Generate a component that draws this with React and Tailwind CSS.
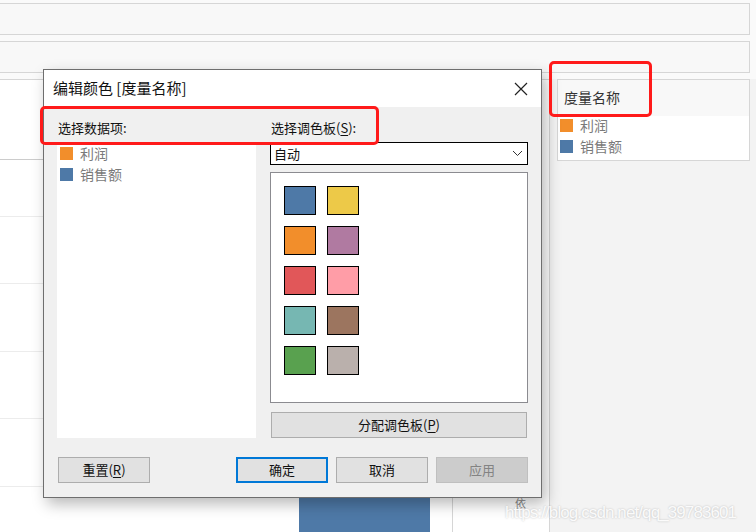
import React from 'react';

const font = { fontFamily: '"Noto Sans CJK SC", "Noto Sans", sans-serif' };

const swatches = [
  ['#4e79a7', '#edc948'],
  ['#f28e2b', '#b07aa1'],
  ['#e15759', '#ff9da7'],
  ['#76b7b2', '#9c755f'],
  ['#59a14f', '#bab0ac'],
];

const Btn = ({ children, className = '' }) => (
  <div className={`h-[26px] flex items-center justify-center text-[13px] ${className}`}>{children}</div>
);

const Dialog = () => (
  <div className="absolute left-[43px] top-[69px] w-[499px] h-[429px] border border-[#6e6e6e] bg-[#f0f0f0] shadow-[4px_6px_14px_rgba(0,0,0,0.28)] flex flex-col">
    {/* title */}
    <div className="h-[37px] bg-white flex items-center justify-between pl-[9px] pr-[12px]">
      <span className="text-[15px] text-[#111]">编辑颜色 [度量名称]</span>
      <svg width="14" height="14" viewBox="0 0 14 14" className="mr-[1px]">
        <path d="M1 1 L13 13 M13 1 L1 13" stroke="#222" strokeWidth="1.2" />
      </svg>
    </div>
    <div className="flex-1 flex flex-col px-[13px] pt-[10px]">
      <div className="flex gap-[14px]">
        {/* left column */}
        <div className="w-[199px] flex flex-col">
          <div className="h-[21px] pl-[1px] text-[13px] text-[#111] leading-[21px]">选择数据项:</div>
          <div className="mt-[6px] h-[294px] bg-white pt-[1px] pl-[3px]">
            <div className="flex items-center gap-[7px] h-[17px]">
              <span className="w-[13px] h-[13px] bg-[#f28e2b]" />
              <span className="text-[14px] text-[#7a7a7a]">利润</span>
            </div>
            <div className="flex items-center gap-[7px] h-[17px] mt-[4px]">
              <span className="w-[13px] h-[13px] bg-[#4e79a7]" />
              <span className="text-[14px] text-[#7a7a7a]">销售额</span>
            </div>
          </div>
        </div>
        {/* right column */}
        <div className="w-[258px] flex flex-col">
          <div className="h-[21px] pl-[1px] text-[13px] text-[#111] leading-[21px]">
            选择调色板(<span className="underline underline-offset-2">S</span>):
          </div>
          <div className="mt-[4px] h-[23px] bg-white border border-black flex items-center justify-between pl-[3px] pr-[4px]">
            <span className="text-[13px] text-[#111]">自动</span>
            <svg width="11" height="7" viewBox="0 0 11 7">
              <path d="M1 1 L5.5 5.5 L10 1" stroke="#333" strokeWidth="1" fill="none" />
            </svg>
          </div>
          <div className="mt-[7px] h-[231px] bg-white border border-[#8b8b90] pt-[13px] pl-[13px] flex flex-col gap-[11px]">
            {swatches.map((row, i) => (
              <div key={i} className="flex gap-[11px]">
                {row.map((c) => (
                  <span key={c} className="w-[32px] h-[29px] border border-black" style={{ backgroundColor: c }} />
                ))}
              </div>
            ))}
          </div>
          <Btn className="mt-[9px] ml-[1px] w-[256px] bg-[#e1e1e1] border border-[#adadad] text-[#111]">
            分配调色板(<span className="underline underline-offset-2">P</span>)
          </Btn>
        </div>
      </div>
      <div className="flex mt-[19px] pl-[1px]">
        <Btn className="w-[92px] bg-[#e1e1e1] border border-[#adadad] text-[#111]">
          重置(<span className="underline underline-offset-2">R</span>)
        </Btn>
        <Btn className="ml-[86px] w-[92px] bg-[#e1e1e1] border-2 border-[#0078d7] text-[#111]">确定</Btn>
        <Btn className="ml-[8px] w-[92px] bg-[#e1e1e1] border border-[#adadad] text-[#111]">取消</Btn>
        <Btn className="ml-[8px] w-[92px] bg-[#cccccc] border border-[#bfbfbf] text-[#838383]">应用</Btn>
      </div>
    </div>
  </div>
);

export default function App() {
  return (
    <div className="relative w-[756px] h-[532px] overflow-hidden bg-[#fafafa]" style={font}>
      <div className="pt-[3px]">
        <div className="w-[750px] h-[32px] bg-[#f8f8f8] border border-l-0 border-[#d6d6d6]" />
        <div className="mt-[6px] w-[750px] h-[32px] bg-[#f8f8f8] border border-l-0 border-[#d6d6d6]" />
      </div>
      <div className="mt-[6px] flex h-[454px]">
        {/* chart area */}
        <div className="w-[452px] bg-white border-t border-[#d6d6d6] flex flex-col">
          <div className="h-[80px] border-b border-[#cccccc]" />
          <div className="h-[57px] border-b border-[#ececec]" />
          <div className="h-[67px] border-b border-[#ececec]" />
          <div className="h-[68px] border-b border-[#ececec]" />
          <div className="h-[67px] border-b border-[#ececec]" />
          <div className="h-[68px] border-b border-[#ececec]" />
          <div className="flex-1 pt-[10px] pl-[299px]">
            <div className="w-[131px] h-full bg-[#4e79a7]" />
          </div>
        </div>
        <div className="w-[97px] bg-white border-t border-l border-[#d6d6d6] pl-[62px] pt-[417px]">
          <span className="block text-[11px] leading-[12px] text-[#888]">依</span>
        </div>
        {/* legend panel */}
        <div className="flex-1 bg-[#f3f3f3] border-l border-[#d6d6d6] pl-[7px]">
          <div className="w-[193px] border border-[#d6d6d6] bg-white">
            <div className="h-[36px] bg-[#f8f8f8] flex items-end pl-[6px] pb-[8px] text-[14px] text-[#333]">度量名称</div>
            <div className="pl-[2px] pt-[1px] pb-[5px]">
              <div className="flex items-center gap-[7px] h-[17px]">
                <span className="w-[13px] h-[13px] bg-[#f28e2b]" />
                <span className="text-[14px] text-[#7a7a7a]">利润</span>
              </div>
              <div className="flex items-center gap-[7px] h-[17px] mt-[4px]">
                <span className="w-[13px] h-[13px] bg-[#4e79a7]" />
                <span className="text-[14px] text-[#7a7a7a]">销售额</span>
              </div>
            </div>
          </div>
        </div>
      </div>

      <Dialog />

      {/* annotations */}
      <div className="absolute left-[40px] top-[106px] w-[339px] h-[39px] border-[3px] border-[#ff1a1a] rounded-[5px]" />
      <div className="absolute left-[549px] top-[61px] w-[103px] h-[56px] border-[3px] border-[#ff1a1a] rounded-[5px]" />

      <div
        className="absolute left-[505px] top-[503px] text-[17px] leading-[20px] tracking-[-0.9px] text-white/90 [text-shadow:0_0_2px_rgba(0,0,0,0.25)]"
        style={{ fontFamily: '"Liberation Sans", Arial, sans-serif' }}
      >
        https://blog.csdn.net/qq_39783601
      </div>
    </div>
  );
}
